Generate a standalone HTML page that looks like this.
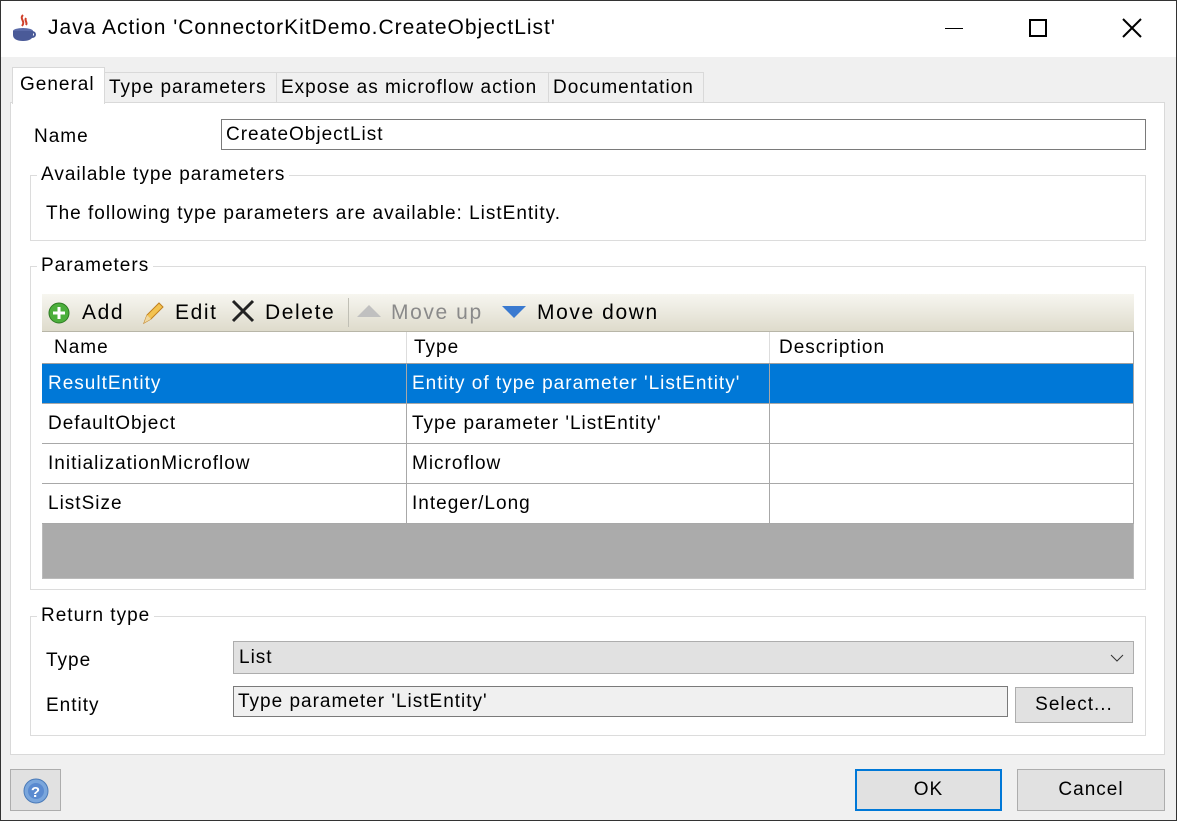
<!DOCTYPE html>
<html><head><style>
*{box-sizing:border-box;margin:0;padding:0}
body{width:1177px;height:821px;background:#f0f0f0;font-family:"Liberation Sans",sans-serif;font-size:19px;letter-spacing:1px;color:#000;position:relative;overflow:hidden}
.a{position:absolute}
.t{white-space:nowrap}
.grp{position:absolute;border:1px solid #dcdcdc}
.lg{position:absolute;background:#fff;padding:0 4px;top:-13px;left:6px;line-height:24px}
.tab{position:absolute;top:72px;height:31px;border:1px solid #d9d9d9;background:#f0f0f0;line-height:30px;padding-left:4px}
.cell{position:absolute;border-right:1px solid #a8a8a8;border-bottom:1px solid #a8a8a8;height:40px;line-height:40px;padding-left:6px;white-space:nowrap}
.btn{position:absolute;background:#e1e1e1;border:1px solid #adadad;text-align:center}
.tb{font-size:21px;letter-spacing:1.6px}
</style></head><body>
<div class="a" style="left:0;top:0;width:1177px;height:57px;background:#fff"></div>
<svg class="a" style="left:11px;top:13px" width="26" height="30" viewBox="0 0 26 30">
<path d="M12 2c-4 4 3 6-1 11M15 5c-2 3 2 4 0 7" stroke="#d0402a" stroke-width="2" fill="none"/>
<ellipse cx="12" cy="18" rx="10" ry="3" fill="#5a6aa8"/>
<path d="M2 18v4c0 4 4 6 10 6s10-2 10-6v-4" fill="#4a5a98"/>
<path d="M21 19c4 0 4 5 0 5" stroke="#4a5a98" stroke-width="2" fill="none"/></svg>
<div class="a t" style="left:48px;top:16px;font-size:21px">Java Action 'ConnectorKitDemo.CreateObjectList'</div>
<div class="a" style="left:945px;top:28px;width:18px;height:1px;background:#000"></div>
<div class="a" style="left:1029px;top:19px;width:18px;height:18px;border:2px solid #000"></div>
<svg class="a" style="left:1121px;top:17px" width="22" height="22"><path d="M2 2L20 20M20 2L2 20" stroke="#000" stroke-width="2"/></svg>

<div class="a" style="left:10px;top:102px;width:1155px;height:653px;background:#fff;border:1px solid #d9d9d9"></div>
<div class="tab t" style="left:104px;width:173px">Type parameters</div>
<div class="tab t" style="left:276px;width:273px">Expose as microflow action</div>
<div class="tab t" style="left:548px;width:156px">Documentation</div>
<div class="a t" style="left:12px;top:67px;width:93px;height:37px;background:#fff;border:1px solid #d9d9d9;border-bottom:none;line-height:34px;padding-left:7px">General</div>

<div class="a t" style="left:34px;top:126px">Name</div>
<div class="a t" style="left:221px;top:119px;width:925px;height:31px;border:1px solid #7a7a7a;padding-left:4px;line-height:29px">CreateObjectList</div>

<div class="grp" style="left:30px;top:175px;width:1116px;height:66px"><div class="lg t">Available type parameters</div></div>
<div class="a t" style="left:46px;top:203px">The following type parameters are available: ListEntity.</div>

<div class="grp" style="left:30px;top:266px;width:1116px;height:324px"><div class="lg t">Parameters</div></div>
<div class="a" style="left:42px;top:294px;width:1092px;height:38px;background:linear-gradient(#f7f6f0,#dedbcc);border-bottom:1px solid #b8b6a8"></div>
<svg class="a" style="left:47px;top:301px" width="24" height="24"><circle cx="12" cy="12" r="10" fill="#4caf3c" stroke="#2d7a22"/><path d="M12 6v12M6 12h12" stroke="#fff" stroke-width="3"/></svg>
<div class="a t tb" style="left:82px;top:301px">Add</div>
<svg class="a" style="left:139px;top:299px" width="28" height="28"><path d="M5 24l3-8L20 4l4 4L12 20z" fill="#f3c350" stroke="#c08020"/><path d="M5 24l3-8 4 4z" fill="#f0d8a0"/></svg>
<div class="a t tb" style="left:175px;top:301px">Edit</div>
<svg class="a" style="left:230px;top:298px" width="26" height="26"><path d="M3 3L23 23M23 3L3 23" stroke="#222" stroke-width="3"/></svg>
<div class="a t tb" style="left:265px;top:301px">Delete</div>
<div class="a" style="left:348px;top:298px;width:1px;height:29px;background:#c0bfb5"></div>
<svg class="a" style="left:356px;top:304px" width="26" height="14"><path d="M1 13L13 1L25 13z" fill="#c0c0c0"/></svg>
<div class="a t tb" style="left:391px;top:301px;color:#8a8a8a">Move up</div>
<svg class="a" style="left:501px;top:305px" width="26" height="14"><path d="M1 1L13 13L25 1z" fill="#3a7ad0"/></svg>
<div class="a t tb" style="left:537px;top:301px">Move down</div>

<div class="a" style="left:42px;top:332px;width:1092px;height:247px;background:#ababab;border:1px solid #bbb"></div>
<div class="cell" style="left:42px;top:332px;width:365px;height:32px;line-height:32px;background:#fff;padding-left:12px;border-right-color:#ddd">Name</div>
<div class="cell" style="left:407px;top:332px;width:363px;height:32px;line-height:32px;background:#fff;padding-left:7px;border-right-color:#ddd">Type</div>
<div class="cell" style="left:770px;top:332px;width:364px;height:32px;line-height:32px;background:#fff;padding-left:9px">Description</div>
<div class="a" style="left:42px;top:363px;width:1092px;height:1px;background:#a0a0a0"></div>
<div class="cell" style="left:42px;top:364px;width:365px;background:#0078d7;color:#fff">ResultEntity</div>
<div class="cell" style="left:407px;top:364px;width:363px;background:#0078d7;color:#fff;padding-left:5px">Entity of type parameter 'ListEntity'</div>
<div class="cell" style="left:770px;top:364px;width:364px;background:#0078d7"></div>
<div class="cell" style="left:42px;top:404px;width:365px;background:#fff">DefaultObject</div>
<div class="cell" style="left:407px;top:404px;width:363px;background:#fff;padding-left:5px">Type parameter 'ListEntity'</div>
<div class="cell" style="left:770px;top:404px;width:364px;background:#fff"></div>
<div class="cell" style="left:42px;top:444px;width:365px;background:#fff">InitializationMicroflow</div>
<div class="cell" style="left:407px;top:444px;width:363px;background:#fff;padding-left:5px">Microflow</div>
<div class="cell" style="left:770px;top:444px;width:364px;background:#fff"></div>
<div class="cell" style="left:42px;top:484px;width:365px;background:#fff">ListSize</div>
<div class="cell" style="left:407px;top:484px;width:363px;background:#fff;padding-left:5px">Integer/Long</div>
<div class="cell" style="left:770px;top:484px;width:364px;background:#fff"></div>

<div class="grp" style="left:30px;top:616px;width:1116px;height:120px"><div class="lg t">Return type</div></div>
<div class="a t" style="left:46px;top:650px">Type</div>
<div class="a t" style="left:233px;top:641px;width:901px;height:33px;background:#e1e1e1;border:1px solid #adadad;line-height:31px;padding-left:5px">List</div>
<svg class="a" style="left:1110px;top:653px" width="14" height="10"><path d="M1 2l6 6 6-6" stroke="#333" fill="none"/></svg>
<div class="a t" style="left:46px;top:695px">Entity</div>
<div class="a t" style="left:233px;top:686px;width:775px;height:31px;background:#f0f0f0;border:1px solid #7a7a7a;line-height:29px;padding-left:4px">Type parameter 'ListEntity'</div>
<div class="btn t" style="left:1015px;top:687px;width:118px;height:36px;line-height:34px">Select...</div>

<div class="btn" style="left:10px;top:769px;width:51px;height:42px"></div>
<svg class="a" style="left:22px;top:777px" width="28" height="28"><circle cx="14" cy="14" r="12" fill="#7aa6dc" stroke="#4a7ab8"/><circle cx="14" cy="14" r="8" fill="#5a8ad0"/><text x="14" y="20" font-size="15" font-weight="bold" fill="#fff" text-anchor="middle" font-family="Liberation Sans">?</text></svg>
<div class="btn" style="left:855px;top:769px;width:147px;height:42px;line-height:38px;border:2px solid #0078d7">OK</div>
<div class="btn" style="left:1017px;top:769px;width:148px;height:42px;line-height:40px">Cancel</div>
<div class="a" style="left:0;top:0;width:1177px;height:821px;border:1px solid #333;pointer-events:none"></div>
</body></html>
